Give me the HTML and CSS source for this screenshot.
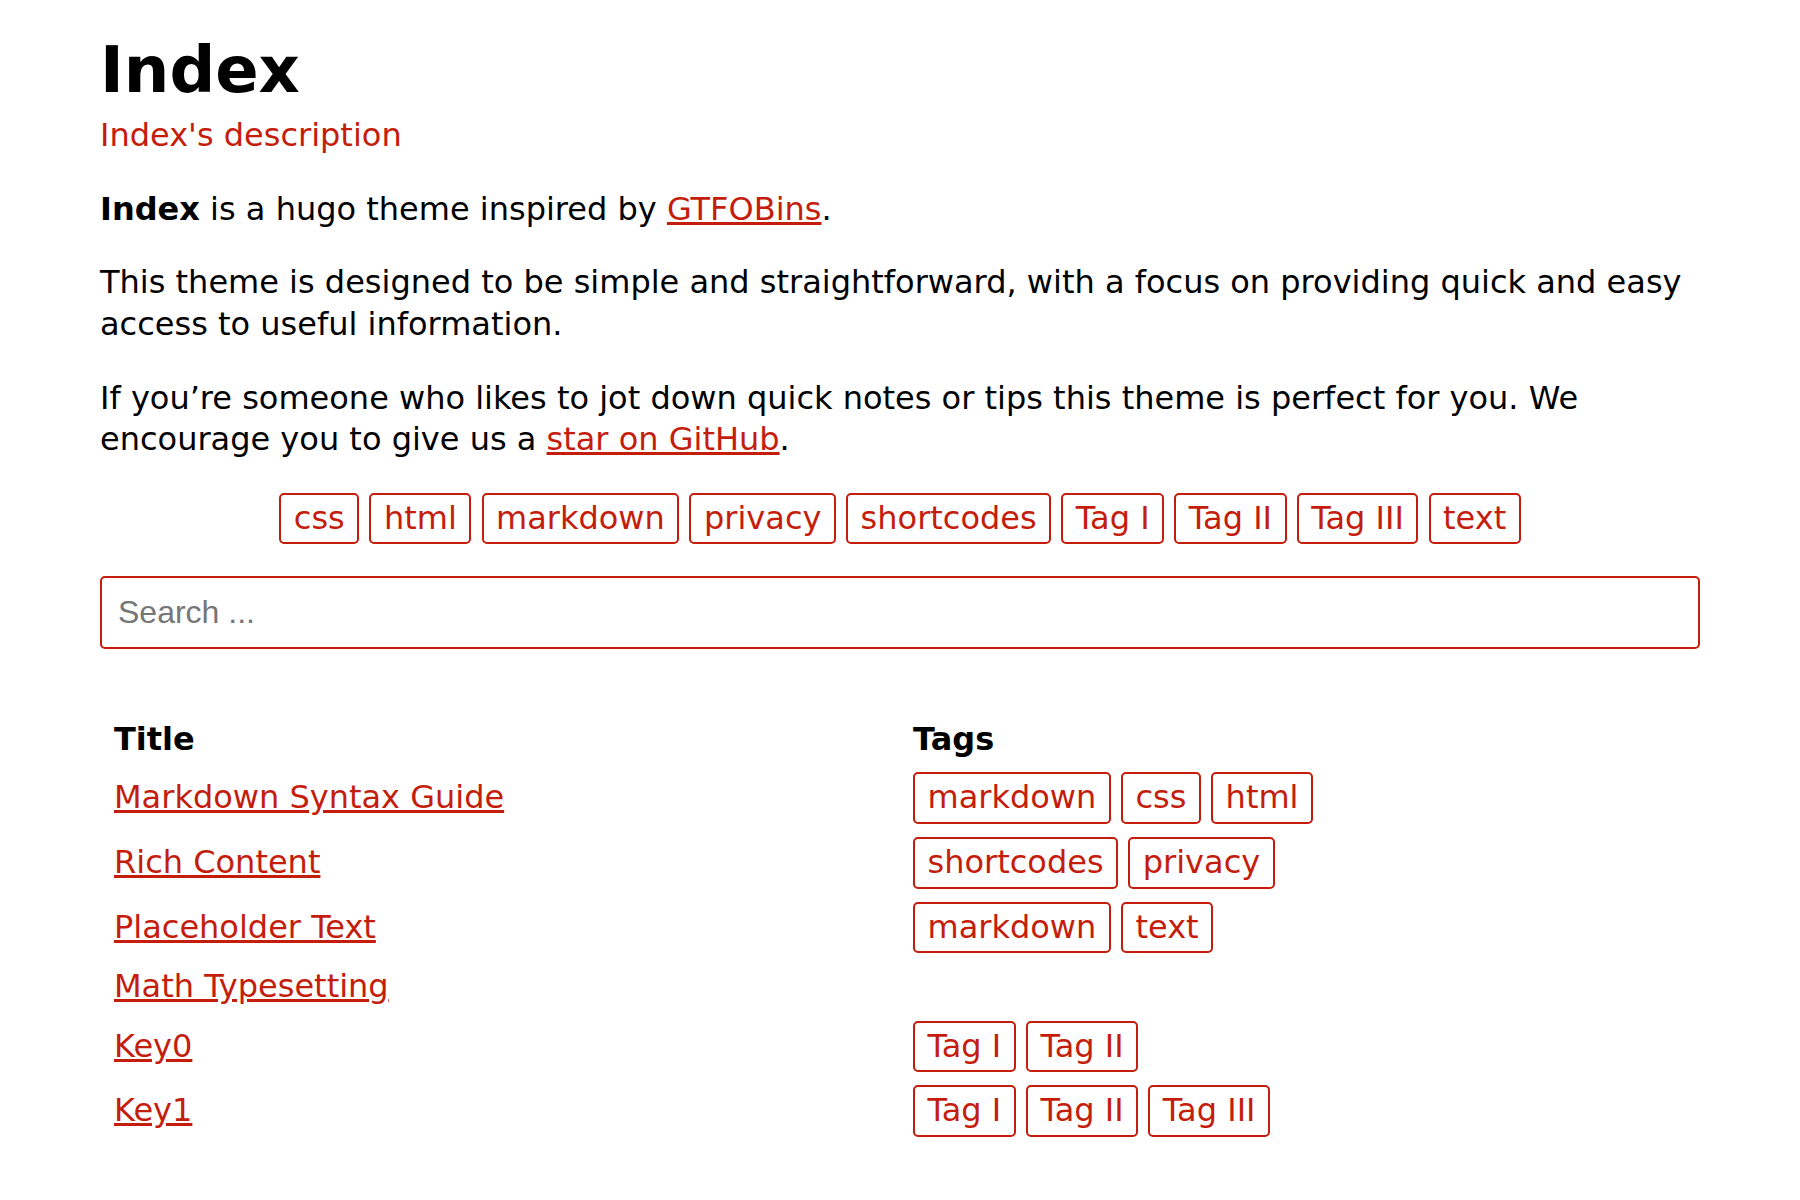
FILE: index.html
```html
<!DOCTYPE html>
<html lang="en">
<head>
<meta charset="utf-8">
<title>Index</title>
<link rel="stylesheet" href="styles.css">
</head>
<body>
<main class="page">
  <header class="site-header">
    <h1 class="site-title">Index</h1>
    <div class="site-desc">Index's description</div>
  </header>
  <p><strong>Index</strong> is a hugo theme inspired by <a href="#">GTFOBins</a>.</p>
  <p>This theme is designed to be simple and straightforward, with a focus on providing quick and easy access to useful information.</p>
  <p>If you’re someone who likes to jot down quick notes or tips this theme is perfect for you. We encourage you to give us a <a href="#">star on GitHub</a>.</p>
  <div class="tag-cloud">
    <a class="tag" href="#">css</a>
    <a class="tag" href="#">html</a>
    <a class="tag" href="#">markdown</a>
    <a class="tag" href="#">privacy</a>
    <a class="tag" href="#">shortcodes</a>
    <a class="tag" href="#">Tag I</a>
    <a class="tag" href="#">Tag II</a>
    <a class="tag" href="#">Tag III</a>
    <a class="tag" href="#">text</a>
  </div>
  <input class="search" type="text" placeholder="Search ...">
  <table class="posts">
    <thead>
      <tr><th>Title</th><th>Tags</th></tr>
    </thead>
    <tbody>
      <tr><td><a href="#">Markdown Syntax Guide</a></td><td><a class="tag" href="#">markdown</a> <a class="tag" href="#">css</a> <a class="tag" href="#">html</a></td></tr>
      <tr><td><a href="#">Rich Content</a></td><td><a class="tag" href="#">shortcodes</a> <a class="tag" href="#">privacy</a></td></tr>
      <tr><td><a href="#">Placeholder Text</a></td><td><a class="tag" href="#">markdown</a> <a class="tag" href="#">text</a></td></tr>
      <tr><td><a href="#">Math Typesetting</a></td><td></td></tr>
      <tr><td><a href="#">Key0</a></td><td><a class="tag" href="#">Tag I</a> <a class="tag" href="#">Tag II</a></td></tr>
      <tr><td><a href="#">Key1</a></td><td><a class="tag" href="#">Tag I</a> <a class="tag" href="#">Tag II</a> <a class="tag" href="#">Tag III</a></td></tr>
    </tbody>
  </table>
</main>
</body>
</html>
```

FILE: styles.css
```css
html, body {
  margin: 0;
  padding: 0;
  background: #fff;
}

body {
  font-family: "DejaVu Sans", sans-serif;
  font-size: 32px;
  line-height: 1.3;
  color: #000;
}

.page {
  padding: 29px 100px 40px;
}

a {
  color: #c41d0c;
}

.site-title {
  margin: 0;
  font-size: 64px;
  font-weight: bold;
  line-height: 1.3;
}

.site-desc {
  margin-top: 3px;
  color: #c41d0c;
}

p {
  margin: 32px 0;
}

.tag-cloud {
  text-align: center;
  margin: 32px 0;
}

.tag {
  display: inline-block;
  padding: 3px 12.5px;
  border: 2px solid #c41d0c;
  border-radius: 5px;
  color: #c41d0c;
  text-decoration: none;
}

.search {
  display: block;
  box-sizing: border-box;
  width: 100%;
  margin: 0;
  padding: 16px 16px;
  font-family: "Liberation Sans", Arial, sans-serif;
  font-size: 32px;
  border: 2px solid #c41d0c;
  border-radius: 5px;
  outline: none;
  background: #fff;
}

.search::placeholder {
  color: #767676;
}

.posts {
  width: 100%;
  margin-top: 64px;
  border-spacing: 2px;
  table-layout: fixed;
}

.posts th,
.posts td {
  text-align: left;
  padding: 5.5px 12px;
  vertical-align: middle;
}

.posts th {
  font-weight: bold;
  padding-top: 4px;
  padding-bottom: 4px;
}
```
